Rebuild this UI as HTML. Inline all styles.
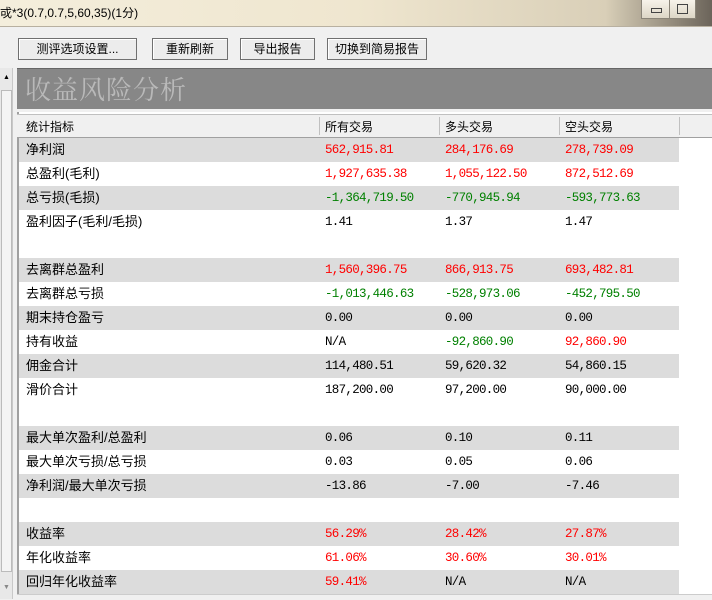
<!DOCTYPE html>
<html><head><meta charset="utf-8"><style>
body{margin:0;width:712px;height:599px;overflow:hidden;background:#f0f0f0;font-family:"Liberation Sans","Noto Sans CJK SC",sans-serif;position:relative}
.title{position:absolute;left:0;top:0;width:712px;height:26px;background:linear-gradient(90deg,#f4eedc,#efe6cf 50%,#d9cfb8 85%,#6b645a);border-bottom:1px solid #b8b0a0}
.title span{position:absolute;left:0;top:4px;font-size:12px;color:#000}
.wb{position:absolute;top:0;height:18px;border:1px solid #8a8478;background:linear-gradient(#f7f3ea,#ddd6c6);border-top:none}
.btn{position:absolute;top:38px;height:20px;border:1px solid #707070;background:#ececec;box-shadow:inset 1px 1px #fff;font-size:12px;text-align:center;line-height:20px;font-family:"Liberation Sans","WenQuanYi Zen Hei",sans-serif}
.sb{position:absolute;left:0;top:68px;width:12px;height:531px;background:#e8e8e8;border-right:1px solid #c8c8c8}
.band{position:absolute;left:17px;top:68px;width:695px;height:40px;background:#878787;border-top:1px solid #666}
.band span{position:absolute;left:8px;top:1px;font-size:26px;color:#b9b9b9;font-family:"Noto Serif CJK SC",serif;letter-spacing:1px}
.area{position:absolute;left:17px;top:112px;width:695px;height:487px;background:#fff;border-left:2px solid #a0a0a0}
.hdr{position:absolute;left:17px;top:114px;width:695px;height:22px;background:#f0f0f0;border-top:1px solid #c0c0c0;border-bottom:1px solid #a0a0a0;font-size:12px}
.hdr div{position:absolute;top:3px}
.hdr i{position:absolute;top:2px;width:1px;height:18px;background:#c0c0c0}
.row{position:absolute;left:19px;width:660px;height:24px;font-size:13px;line-height:24px}
.g{background:#dcdcdc}
.row div{position:absolute;top:0;white-space:pre}
.c0{left:7px;font-family:"Liberation Sans","WenQuanYi Zen Hei",sans-serif}
.c1{left:306px}.c2{left:426px}.c3{left:546px}
.n{font-family:"Liberation Mono",monospace;font-size:12.5px;letter-spacing:-0.7px}
.r{color:#f00}.gr{color:#008000}
</style></head><body>
<div class="title"><span>戓*3(0.7,0.7,5,60,35)(1分)</span>
<div class="wb" style="left:641px;width:27px"><div style="position:absolute;left:9px;top:8px;width:9px;height:3px;border:1px solid #444"></div></div>
<div class="wb" style="left:669px;width:25px"><div style="position:absolute;left:7px;top:4px;width:9px;height:8px;border:1px solid #444"></div></div>
</div>
<div class="btn" style="left:18px;width:117px">测评选项设置...</div>
<div class="btn" style="left:152px;width:74px">重新刷新</div>
<div class="btn" style="left:240px;width:73px">导出报告</div>
<div class="btn" style="left:327px;width:98px">切换到简易报告</div>
<div class="sb"><div style="position:absolute;left:3px;top:6px;font-size:7px">▲</div><div style="position:absolute;left:1px;top:22px;width:9px;height:480px;background:#f4f4f4;border:1px solid #bbb"></div><div style="position:absolute;left:3px;bottom:8px;font-size:7px;color:#888">▼</div></div>
<div class="band"><span>收益风险分析</span></div>
<div class="area"></div>
<div class="hdr"><div style="left:9px">统计指标</div><i style="left:302px"></i><div style="left:308px">所有交易</div><i style="left:422px"></i><div style="left:428px">多头交易</div><i style="left:542px"></i><div style="left:548px">空头交易</div><i style="left:662px"></i></div>

<div class="row g" style="top:138px"><div class="c0">净利润</div><div class="c1 n r">562,915.81</div><div class="c2 n r">284,176.69</div><div class="c3 n r">278,739.09</div></div>
<div class="row" style="top:162px"><div class="c0">总盈利(毛利)</div><div class="c1 n r">1,927,635.38</div><div class="c2 n r">1,055,122.50</div><div class="c3 n r">872,512.69</div></div>
<div class="row g" style="top:186px"><div class="c0">总亏损(毛损)</div><div class="c1 n gr">-1,364,719.50</div><div class="c2 n gr">-770,945.94</div><div class="c3 n gr">-593,773.63</div></div>
<div class="row" style="top:210px"><div class="c0">盈利因子(毛利/毛损)</div><div class="c1 n">1.41</div><div class="c2 n">1.37</div><div class="c3 n">1.47</div></div>
<div class="row g" style="top:258px"><div class="c0">去离群总盈利</div><div class="c1 n r">1,560,396.75</div><div class="c2 n r">866,913.75</div><div class="c3 n r">693,482.81</div></div>
<div class="row" style="top:282px"><div class="c0">去离群总亏损</div><div class="c1 n gr">-1,013,446.63</div><div class="c2 n gr">-528,973.06</div><div class="c3 n gr">-452,795.50</div></div>
<div class="row g" style="top:306px"><div class="c0">期末持仓盈亏</div><div class="c1 n">0.00</div><div class="c2 n">0.00</div><div class="c3 n">0.00</div></div>
<div class="row" style="top:330px"><div class="c0">持有收益</div><div class="c1 n">N/A</div><div class="c2 n gr">-92,860.90</div><div class="c3 n r">92,860.90</div></div>
<div class="row g" style="top:354px"><div class="c0">佣金合计</div><div class="c1 n">114,480.51</div><div class="c2 n">59,620.32</div><div class="c3 n">54,860.15</div></div>
<div class="row" style="top:378px"><div class="c0">滑价合计</div><div class="c1 n">187,200.00</div><div class="c2 n">97,200.00</div><div class="c3 n">90,000.00</div></div>
<div class="row g" style="top:426px"><div class="c0">最大单次盈利/总盈利</div><div class="c1 n">0.06</div><div class="c2 n">0.10</div><div class="c3 n">0.11</div></div>
<div class="row" style="top:450px"><div class="c0">最大单次亏损/总亏损</div><div class="c1 n">0.03</div><div class="c2 n">0.05</div><div class="c3 n">0.06</div></div>
<div class="row g" style="top:474px"><div class="c0">净利润/最大单次亏损</div><div class="c1 n">-13.86</div><div class="c2 n">-7.00</div><div class="c3 n">-7.46</div></div>
<div class="row g" style="top:522px"><div class="c0">收益率</div><div class="c1 n r">56.29%</div><div class="c2 n r">28.42%</div><div class="c3 n r">27.87%</div></div>
<div class="row" style="top:546px"><div class="c0">年化收益率</div><div class="c1 n r">61.06%</div><div class="c2 n r">30.60%</div><div class="c3 n r">30.01%</div></div>
<div class="row g" style="top:570px"><div class="c0">回归年化收益率</div><div class="c1 n r">59.41%</div><div class="c2 n">N/A</div><div class="c3 n">N/A</div></div>
<div style="position:absolute;left:17px;top:594px;width:695px;height:5px;background:#f0f0f0;border-top:1px solid #ccc"></div>
</body></html>
